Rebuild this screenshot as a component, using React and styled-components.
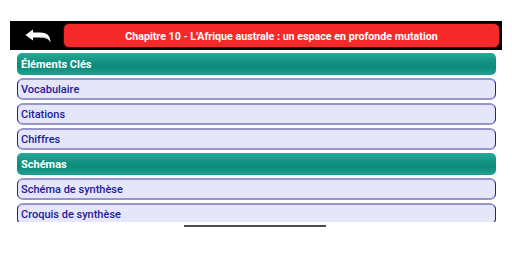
import React from "react";
import styled, { createGlobalStyle } from "styled-components";

const Global = createGlobalStyle`
  html, body { margin: 0; padding: 0; background: #ffffff; }
  body { width: 512px; height: 256px; overflow: hidden; font-family: Roboto, "Liberation Sans", sans-serif; }
`;

const Page = styled.div`
  width: 512px;
  height: 256px;
  position: relative;
  padding-top: 21px;
  box-sizing: border-box;
`;

const Header = styled.div`
  margin-left: 10px;
  width: 492px;
  height: 29px;
  background: #000;
  display: flex;
  align-items: center;
  box-sizing: border-box;
`;

const BackButton = styled.div`
  width: 53px;
  height: 29px;
  display: flex;
  align-items: center;
  justify-content: center;
  padding-left: 2px;
  box-sizing: border-box;
`;

const Title = styled.div`
  flex: 1;
  margin-right: 2px;
  height: 25px;
  background: #f42a2a;
  border: 1px solid #3a0a0a;
  border-radius: 6px;
  box-sizing: border-box;
  display: flex;
  align-items: center;
  justify-content: center;
  color: #fff;
  font-weight: 700;
  font-size: 10.7px;
  padding-top: 1px;
`;

const List = styled.div`
  margin-left: 17px;
  width: 479px;
  height: 172px;
  padding-top: 3px;
  box-sizing: border-box;
  overflow: hidden;
  display: flex;
  flex-direction: column;
  gap: 3px;
`;

const Section = styled.div`
  flex: 0 0 22px;
  border-radius: 5px;
  background: linear-gradient(#2aa897 0%, #10907f 45%, #0c8c7c 65%, #22a190 100%);
  color: #fff;
  font-weight: 700;
  font-size: 11px;
  display: flex;
  align-items: center;
  padding-left: 4px;
  box-sizing: border-box;
`;

const Item = styled.div`
  flex: 0 0 22px;
  border-radius: 6px;
  background: #e6e6fb;
  border-top: 2px solid #9696cc;
  border-bottom: 2px solid #9696cc;
  border-left: 1px solid #2020a6;
  border-right: 1px solid #2020a6;
  color: #1c1c98;
  font-weight: 500;
  font-size: 11px;
  display: flex;
  align-items: center;
  padding-left: 3px;
  box-sizing: border-box;
`;

const NavHandle = styled.div`
  position: absolute;
  left: 184px;
  top: 225px;
  width: 142px;
  height: 2px;
  background: #4a4a4a;
`;

const BackArrow = () => (
  <svg width="26" height="14" viewBox="0 0 26 14">
    <path
      d="M0.5 6 L8 0.5 L8 3.6 L15 3.6 C21.5 3.6 25.5 6.5 25.5 13.5 C23.8 10 21 8.6 15 8.6 L8 8.6 L8 11.6 Z"
      fill="#ffffff"
    />
    <path d="M15 8.6 C21 8.6 23.8 10 25.5 13.5 C24.8 9.5 22 7.5 16 7.4 Z" fill="#bdbdbd" />
  </svg>
);

const entries = [
  { t: "Éléments Clés", s: true },
  { t: "Vocabulaire" },
  { t: "Citations" },
  { t: "Chiffres" },
  { t: "Schémas", s: true },
  { t: "Schéma de synthèse" },
  { t: "Croquis de synthèse" },
];

export default function App() {
  return (
    <Page>
      <Global />
      <Header>
        <BackButton>
          <BackArrow />
        </BackButton>
        <Title>Chapitre 10 - L'Afrique australe : un espace en profonde mutation</Title>
      </Header>
      <List>
        {entries.map((e) =>
          e.s ? <Section key={e.t}>{e.t}</Section> : <Item key={e.t}>{e.t}</Item>
        )}
      </List>
      <NavHandle />
    </Page>
  );
}
